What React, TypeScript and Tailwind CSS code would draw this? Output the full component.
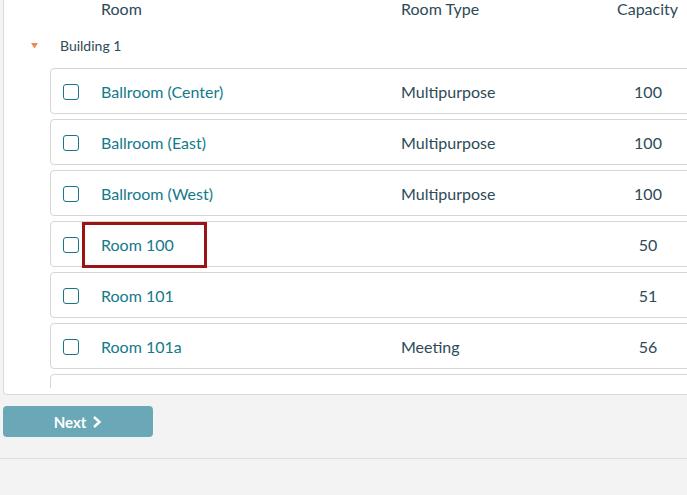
import React from "react";

type Row = { name: string; type: string; cap: string; hl?: boolean };

const rows: Row[] = [
  { name: "Ballroom (Center)", type: "Multipurpose", cap: "100" },
  { name: "Ballroom (East)", type: "Multipurpose", cap: "100" },
  { name: "Ballroom (West)", type: "Multipurpose", cap: "100" },
  { name: "Room 100", type: "", cap: "50", hl: true },
  { name: "Room 101", type: "", cap: "51" },
  { name: "Room 101a", type: "Meeting", cap: "56" },
  { name: "", type: "", cap: "" },
];

export default function App() {
  return (
    <div
      className="w-[687px] h-[495px] bg-[#f3f3f3] overflow-hidden"
      style={{ fontFamily: "Lato, 'Open Sans', sans-serif" }}
    >
      <div className="ml-[3px] w-[740px] bg-white border-l border-b border-[#d9d9d9] rounded-bl-[4px] pb-[6px]">
        {/* header */}
        <div className="h-[20px] flex text-[16px] leading-[18px] text-[#2e4a57]">
          <div className="w-[97px]" />
          <div className="w-[300px]">Room</div>
          <div className="w-[216px]">Room Type</div>
          <div>Capacity</div>
        </div>
        {/* group row */}
        <div className="h-[48px] pt-[3px] flex items-center text-[14px] text-[#2e4a57]">
          <div className="w-[56px] pl-[27px] flex items-center">
            <svg width="7" height="6" viewBox="0 0 7 6">
              <polygon points="0,0 7,0 3.5,5.5" fill="#f08a4b" />
            </svg>
          </div>
          <div>Building 1</div>
        </div>
        {/* list */}
        <div className="h-[320px] overflow-hidden pl-[46px] flex flex-col gap-[5px]">
          {rows.map((r, i) => (
            <div
              key={i}
              className="h-[46px] shrink-0 flex items-center border border-[#d6d6d6] rounded-[4px] bg-white text-[16px]"
            >
              <div className="w-[50px] pl-[12px] pt-[1px] flex items-center">
                {r.name && (
                  <div className="w-[16px] h-[16px] border-[1.5px] border-[#1b7587] rounded-[3px]" />
                )}
              </div>
              <div className="relative w-[300px] h-full flex items-center pt-[1px] text-[#13798b]">
                {r.name}
                {r.hl && (
                  <div className="absolute left-[-19px] top-0 w-[125px] h-[46px] border-[3px] border-[#9b1414]" />
                )}
              </div>
              <div className="w-[200px] pt-[1px] text-[#2e4a57]">{r.type}</div>
              <div className="w-[94px] pt-[1px] text-center text-[#2e4a57]">{r.cap}</div>
            </div>
          ))}
        </div>
      </div>
      <div className="mt-[11px] ml-[3px] w-[150px] h-[31px] pt-[1px] rounded-[4px] bg-[#6aa8b8] flex items-center justify-center gap-[6px] text-white text-[15px] font-bold">
        <span>Next</span>
        <svg width="10" height="14" viewBox="0 0 10 14">
          <polyline points="2,2 7.5,7 2,12" fill="none" stroke="#ffffff" strokeWidth="2.4" />
        </svg>
      </div>
      <div className="mt-[21px] h-px bg-[#dedede]" />
    </div>
  );
}
